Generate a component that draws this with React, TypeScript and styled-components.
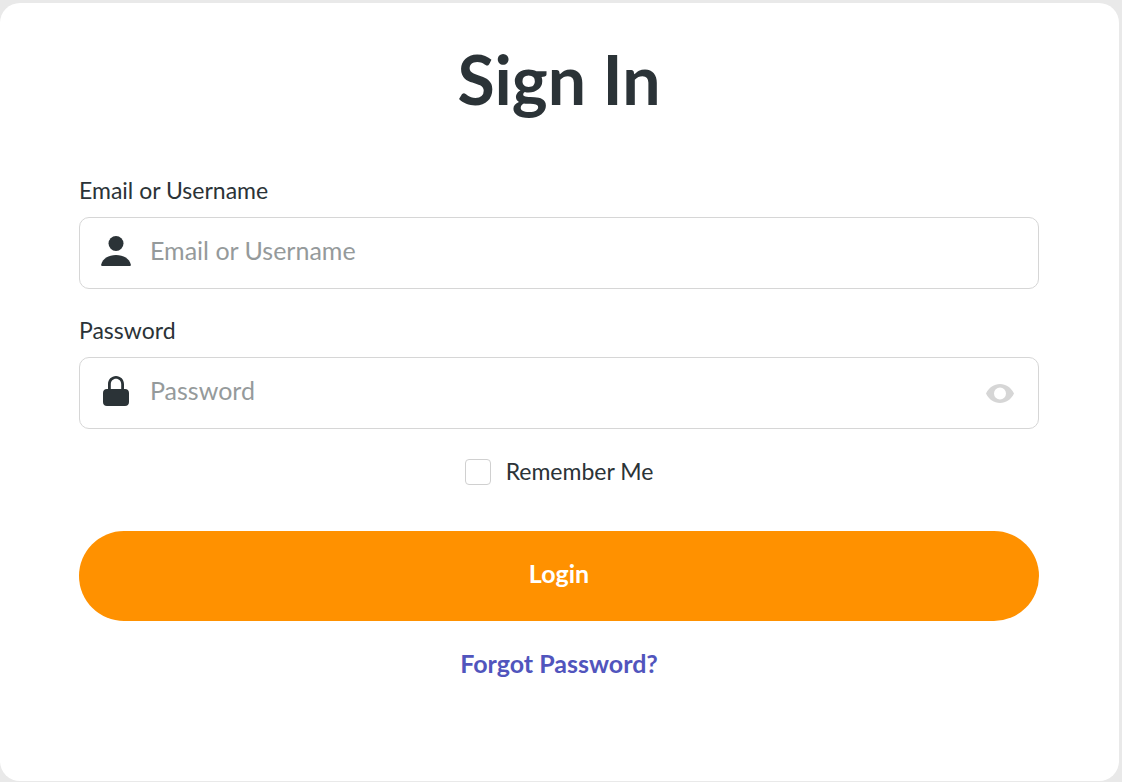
import React from "react";
import styled, { createGlobalStyle } from "styled-components";

const GlobalStyle = createGlobalStyle`
  *, *::before, *::after { box-sizing: border-box; }
  body {
    margin: 0;
    background: #e9e9e9;
    color: #2b3337;
    font-family: Lato, "Open Sans", sans-serif;
  }
`;

const Page = styled.main`
  display: flex;
  min-height: 100vh;
  padding: 3px 3px 1px 0;
`;

const Card = styled.form`
  flex: 1;
  display: flex;
  flex-direction: column;
  padding: 36px 80px 80px 79px;
  border-radius: 20px;
  background: #fff;
`;

const Title = styled.h1`
  margin: 0 0 57px;
  font-size: 68px;
  font-weight: 700;
  line-height: 80px;
  text-align: center;
`;

const Field = styled.div`
  display: flex;
  flex-direction: column;
  gap: 13px;
  margin-bottom: 27px;
`;

const Label = styled.label`
  font-size: 23px;
  line-height: 28px;
`;

const InputBox = styled.div`
  display: flex;
  align-items: center;
  gap: 18px;
  height: 72px;
  padding: 0 20px;
  border: 1px solid #d6d6d6;
  border-radius: 10px;

  &:focus-within { border-color: #ff9100; }
`;

const Icon = styled.svg`
  flex: none;
  width: 32px;
  height: 32px;
  margin-bottom: 4px;
  fill: #2b3337;
`;

const Input = styled.input`
  flex: 1;
  min-width: 0;
  height: 32px;
  margin-bottom: 6px;
  padding: 0;
  border: 0;
  outline: 0;
  background: transparent;
  color: inherit;
  font: inherit;
  font-size: 25px;

  &::placeholder { color: #959a9b; opacity: 1; }
`;

const RevealButton = styled.button`
  display: flex;
  padding: 0;
  border: 0;
  background: none;
  cursor: pointer;

  svg { width: 36px; height: 36px; fill: #d6d6d6; }
`;

const Remember = styled.label`
  display: flex;
  align-items: center;
  align-self: center;
  gap: 15px;
  margin: 3px 0 46px;
  font-size: 23px;
  line-height: 24px;

  span { padding-bottom: 2px; }
`;

const Checkbox = styled.input`
  appearance: none;
  width: 26px;
  height: 26px;
  margin: 0;
  border: 1px solid #d0d0d0;
  border-radius: 4px;
  background: #fff;

  &:checked { background: #ff9100; }
`;

const LoginButton = styled.button`
  height: 90px;
  padding: 0 0 6px;
  border: 0;
  border-radius: 45px;
  background: #ff9100;
  color: #fff;
  font: inherit;
  font-size: 25px;
  font-weight: 700;
  cursor: pointer;
`;

const ForgotLink = styled.a`
  align-self: center;
  margin-top: 28px;
  color: #5155bd;
  font-size: 25px;
  font-weight: 700;
  line-height: 28px;
  text-decoration: none;
`;

export default function App() {
  const [visible, setVisible] = React.useState(false);

  return (
    <Page>
      <GlobalStyle />
      <Card onSubmit={(event: React.FormEvent) => event.preventDefault()}>
        <Title>Sign In</Title>
        <Field>
          <Label htmlFor="username">Email or Username</Label>
          <InputBox>
            <Icon viewBox="0 0 32 32" aria-hidden="true">
              <circle cx="16" cy="8.5" r="7.5" />
              <path d="M2.2 31C1.4 31 1 30.400 1.200 29.500C2.500 23.700 8.500 20 16 20S29.500 23.700 30.800 29.500C31 30.400 30.600 31 29.800 31Z" />
            </Icon>
            <Input id="username" type="text" placeholder="Email or Username" />
          </InputBox>
        </Field>
        <Field>
          <Label htmlFor="password">Password</Label>
          <InputBox>
            <Icon viewBox="0 0 32 32" aria-hidden="true">
              <path d="M8 14V9.200C8 4.600 11.400 1 16 1S24 4.600 24 9.200V14H25C27.500 14 29 15.500 29 18V27C29 29.500 27.500 31 25 31H7C4.500 31 3 29.500 3 27V18C3 15.500 4.500 14 7 14ZM10.800 14H21.200V9.200C21.200 6.200 19 3.800 16 3.800S10.800 6.200 10.800 9.200Z" />
            </Icon>
            <Input
              id="password"
              type={visible ? "text" : "password"}
              placeholder="Password"
            />
            <RevealButton
              type="button"
              aria-label="Show password"
              onClick={() => setVisible(!visible)}
            >
              <svg viewBox="0 0 36 36" aria-hidden="true">
                <path
                  fillRule="evenodd"
                  d="M4 18.500C7 12.500 12 9 18 9S29 12.500 32 18.500C29 24.500 24 28 18 28S7 24.500 4 18.500ZM18 12.500A6 6 0 1 0 18 24.500A6 6 0 1 0 18 12.500Z"
                />
              </svg>
            </RevealButton>
          </InputBox>
        </Field>
        <Remember>
          <Checkbox type="checkbox" />
          <span>Remember Me</span>
        </Remember>
        <LoginButton type="submit">Login</LoginButton>
        <ForgotLink href="#forgot">Forgot Password?</ForgotLink>
      </Card>
    </Page>
  );
}
